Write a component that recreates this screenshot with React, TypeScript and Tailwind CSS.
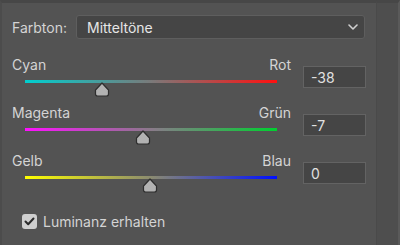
import React from "react";

type Slider = {
  left: string;
  right: string;
  value: string;
  pos: number;
  gradient: string;
};

const sliders: Slider[] = [
  { left: "Cyan", right: "Rot", value: "-38", pos: 77, gradient: "bg-[linear-gradient(to_right,#00cfcf,#7a7a7a_50%,#ff1010)]" },
  { left: "Magenta", right: "Grün", value: "-7", pos: 118, gradient: "bg-[linear-gradient(to_right,#ff10ff,#8a7a8a_50%,#00d030)]" },
  { left: "Gelb", right: "Blau", value: "0", pos: 125, gradient: "bg-[linear-gradient(to_right,#ffff00,#8a8a70_50%,#0010ff)]" },
];

function Thumb() {
  return (
    <svg width="16" height="15" viewBox="0 0 16 15" className="block">
      <path
        d="M8 1 L14.5 8 L14.5 12 Q14.5 14 12.5 14 L3.5 14 Q1.5 14 1.5 12 L1.5 8 Z"
        fill="#b2b2b2"
        stroke="#2e2e2e"
        strokeWidth="1.2"
        strokeLinejoin="round"
      />
    </svg>
  );
}

function SliderRow({ s }: { s: Slider }) {
  return (
    <div className="flex h-[48px]">
      <div className="w-[279px] ml-[12px]">
        <div className="flex justify-between h-[18px] items-center leading-none text-[14px]">
          <span>{s.left}</span>
          <span>{s.right}</span>
        </div>
        <div className={`relative ml-[13px] mr-[14px] mt-[6px] h-[3px] ${s.gradient}`}>
          <div className="absolute top-[2px] -translate-x-1/2" style={{ left: s.pos }}>
            <Thumb />
          </div>
        </div>
      </div>
      <div className="ml-[12px] mt-[10px] w-[63px] h-[22px] bg-[#454545] border border-[#636363] flex items-center pl-[7px] text-[14px] text-[#e0e0e0]">
        {s.value}
      </div>
    </div>
  );
}

export default function App() {
  return (
    <div
      className="w-[400px] h-[245px] bg-[#535353] flex overflow-hidden text-[13px] text-[#d4d4d4]"
      style={{ fontFamily: "Inter, 'Noto Sans', sans-serif" }}
    >
      <div className="w-[376px] h-full border-t-[3px] border-t-[#474747] border-l-[2px] border-l-[#4c4c4c] flex flex-col">
        <div className="flex items-center mt-[12px] h-[24px]">
          <span className="ml-[10px] w-[64px] text-[14px]">Farbton:</span>
          <div className="w-[289px] h-[24px] bg-[#454545] border border-[#5e5e5e] rounded-[3px] flex items-center justify-between pl-[10px] pr-[6px] text-[14px] text-[#e6e6e6]">
            <span>Mitteltöne</span>
            <svg width="10" height="6" viewBox="0 0 10 6">
              <path d="M1 1 L5 5 L9 1" fill="none" stroke="#d0d0d0" strokeWidth="1.6" strokeLinecap="round" strokeLinejoin="round" />
            </svg>
          </div>
        </div>
        <div className="mt-[17px] -ml-[2px]">
          {sliders.map((s) => (
            <SliderRow key={s.left} s={s} />
          ))}
        </div>
        <div className="flex items-center mt-[11px] ml-[20px]">
          <div className="w-[15px] h-[15px] rounded-[3px] bg-[#cfcfcf] flex items-center justify-center">
            <svg width="11" height="9" viewBox="0 0 11 9">
              <path d="M1.5 4.5 L4.2 7.2 L9.5 1.5" fill="none" stroke="#2a2a2a" strokeWidth="2" strokeLinecap="round" strokeLinejoin="round" />
            </svg>
          </div>
          <span className="ml-[6px] text-[14px]">Luminanz erhalten</span>
        </div>
      </div>
      <div className="flex-1 h-full bg-[#4e4e4e] border-t-[3px] border-t-[#474747] border-l border-l-[#4a4a4a] border-r-[2px] border-r-[#5a5a5a]" />
    </div>
  );
}
